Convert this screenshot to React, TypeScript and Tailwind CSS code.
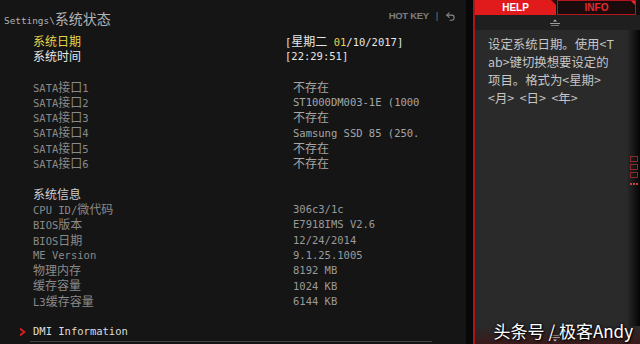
import React from "react";
import { Undo2 } from "lucide-react";

const mono = "font-['DejaVu_Sans_Mono','Noto_Sans_CJK_SC',monospace] text-[10.5px]";

// BIOS font draws CJK wider than latin, so CJK runs get their own size
const T = ({ s }: { s: string }) => (
  <>
    {s.split(/([\u3000-\u9fff\uff00-\uffef]+)/).map((part, i) =>
      /[\u3000-\u9fff\uff00-\uffef]/.test(part) ? (
        <span key={i} className="text-[12px]">
          {part}
        </span>
      ) : (
        <span key={i}>{part}</span>
      )
    )}
  </>
);

const Row = ({
  label,
  value,
  labelCls = "text-[#8a8a8a]",
  valueCls = "text-[#a6a6a6]",
}: {
  label?: string;
  value?: React.ReactNode;
  labelCls?: string;
  valueCls?: string;
}) => (
  <div className="flex h-[15.3px] items-center whitespace-nowrap">
    <div className={`w-[293px] pl-[33px] ${labelCls}`}>{label && <T s={label} />}</div>
    <div className={valueCls}>{typeof value === "string" ? <T s={value} /> : value}</div>
  </div>
);

const sata = [
  ["SATA接口1", "不存在"],
  ["SATA接口2", "ST1000DM003-1E (1000"],
  ["SATA接口3", "不存在"],
  ["SATA接口4", "Samsung SSD 85 (250."],
  ["SATA接口5", "不存在"],
  ["SATA接口6", "不存在"],
];

const info = [
  ["CPU ID/微代码", "306c3/1c"],
  ["BIOS版本", "E7918IMS V2.6"],
  ["BIOS日期", "12/24/2014"],
  ["ME Version", "9.1.25.1005"],
  ["物理内存", "8192 MB"],
  ["缓存容量", "1024 KB"],
  ["L3缓存容量", "6144 KB"],
];

const ScrollMark = ({ down = false }: { down?: boolean }) => (
  <svg width="16" height="8" viewBox="0 0 16 8" className={down ? "rotate-180" : ""}>
    <path d="M6 2.5 L8 0.5 L10 2.5 Z" fill="#bdbdbd" />
    <rect x="3" y="4" width="10" height="1" fill="#9a9a9a" />
    <rect x="4" y="6" width="8" height="1" fill="#7a7a7a" />
  </svg>
);

export default function App() {
  return (
    <div className="flex h-[344px] w-[640px] overflow-hidden bg-black">
      {/* main settings panel */}
      <div className={`flex w-[466px] flex-col bg-[#151515] ${mono}`}>
        <div className="flex h-[34px] items-start justify-between pl-[4px] pr-[10px] pt-[9px]">
          <div className="text-[9.4px] text-[#b3b3b3]">
            Settings\<span className="text-[14px]">系统状态</span>
          </div>
          <div className="flex items-center gap-[7px] font-['Liberation_Sans',sans-serif] text-[9.5px] font-bold tracking-[-0.3px] text-[#7d7d7d]">
            <span>HOT KEY</span>
            <span className="font-normal">|</span>
            <Undo2 size={11} strokeWidth={2.2} className="text-[#8a8a8a]" />
          </div>
        </div>

        <Row
          label="系统日期"
          labelCls="text-[#e2d64c]"
          valueCls="-ml-[8px] text-[#e6e6e6]"
          value={
            <>
              [<span className="text-[12px]">星期二</span> <span className="text-[#e2d64c]">01</span>/10/2017]
            </>
          }
        />
        <Row
          label="系统时间"
          labelCls="text-[#e6e6e6]"
          valueCls="-ml-[8px] text-[#e6e6e6]"
          value="[22:29:51]"
        />
        <Row />
        {sata.map(([l, v]) => (
          <Row key={l} label={l} value={v} />
        ))}
        <Row />
        <Row label="系统信息" labelCls="text-[#cfcfcf]" />
        {info.map(([l, v]) => (
          <Row key={l} label={l} value={v} valueCls="text-[#9a9a9a]" />
        ))}
        <Row />
        <div className="flex h-[15.3px] items-center pl-[19px] text-[#dcdcdc]">
          <svg width="8" height="10" viewBox="0 0 8 10" className="mr-[6px]">
            <path d="M1 0.5 L7 5 L1 9.5 L1 7 L4 5 L1 3 Z" fill="#d42020" />
          </svg>
          DMI Information
        </div>
        <div className="ml-[30px] mt-[1px] h-px w-[402px] bg-[#444]" />
      </div>

      <div className="w-[7px] bg-[#070707]" />
      <div className="w-[2px] bg-[#a81818]" />

      {/* help panel */}
      <div className="relative flex flex-1 flex-col bg-[linear-gradient(to_right,#2a2a2a_0%,#2a2a2a_92%,#050505_100%)]">
        <div className="flex h-[15px] bg-[#140c0c] font-['Liberation_Sans',sans-serif] text-[10px] font-bold">
          <div className="relative flex w-[81px] items-center justify-center bg-[#e11b1b] text-white">
            HELP
            <div className="absolute right-0 top-0 h-0 w-0 border-l-[5px] border-t-[5px] border-l-transparent border-t-[#3a0a0a]" />
          </div>
          <div className="relative ml-[1px] flex w-[79px] items-center justify-center border border-[#b3161c] bg-[#1a0b0c] text-[#e42a30]">
            INFO
            <div className="absolute right-0 top-0 h-0 w-0 border-l-[4px] border-t-[4px] border-l-transparent border-t-[#e42a30]" />
          </div>
        </div>
        <div className="flex h-[15px] items-center justify-center bg-[#1f1f1f] pr-[6px]">
          <ScrollMark />
        </div>

        <div className="whitespace-pre pl-[13px] pt-[5px] font-['Noto_Sans_CJK_SC',sans-serif] text-[12.4px] leading-[18px] text-[#c6c6c6]">
          <div>设定系统日期。使用&lt;T</div>
          <div>ab&gt;键切换想要设定的</div>
          <div>项目。格式为&lt;星期&gt;</div>
          <div>&lt;月&gt;  &lt;日&gt;  &lt;年&gt;</div>
        </div>

        <div className="mt-auto flex h-[18px] items-end justify-center bg-[linear-gradient(to_bottom,#2a2a2a,#3a1a1a)] pb-[2px] pr-[6px]">
          <ScrollMark down />
        </div>

        {/* little side markers on the right edge */}
        <div className="absolute right-[2px] top-[156px] flex flex-col items-center gap-[2px]">
          <div className="h-[6px] w-[8px] border border-[#8a2a2a]" />
          <div className="h-[6px] w-[8px] border border-[#8a2a2a]" />
          <div className="h-[6px] w-[8px] border border-[#8a2a2a]" />
          <div className="mt-[3px] flex gap-[1px]">
            <div className="h-[2px] w-[2px] bg-[#c84040]" />
            <div className="h-[2px] w-[2px] bg-[#c84040]" />
            <div className="h-[2px] w-[2px] bg-[#c84040]" />
          </div>
        </div>

        {/* watermark */}
        <div className="absolute bottom-[5px] right-[7px] font-['Noto_Sans_CJK_SC',sans-serif] text-[17px] leading-none text-white [text-shadow:0_0_3px_#000,1px_1px_2px_#000]">
          头条号 / 极客Andy
        </div>
      </div>
    </div>
  );
}
